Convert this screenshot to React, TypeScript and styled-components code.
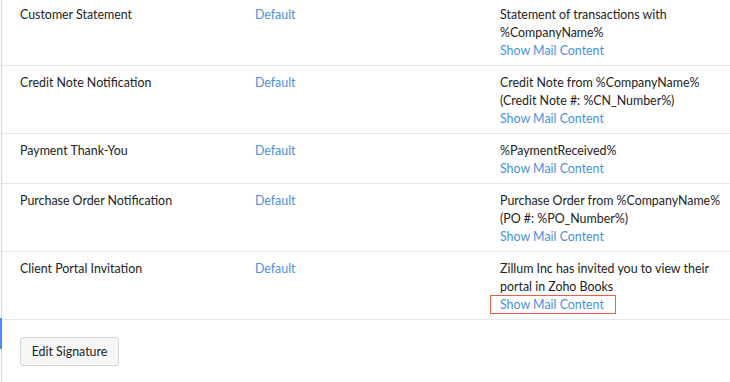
import React from "react";
import styled, { createGlobalStyle } from "styled-components";

const GlobalStyle = createGlobalStyle`
  html, body {
    margin: 0;
    padding: 0;
    background: #ffffff;
  }
  body {
    font-family: Lato, "Open Sans", "Liberation Sans", sans-serif;
    font-size: 12.4px;
    color: #222222;
    overflow: hidden;
  }
`;

const Page = styled.div`
  display: flex;
  width: 730px;
  height: 384px;
  margin-top: -2px;
`;

const Rail = styled.div`
  display: flex;
  flex-direction: column;
  align-items: flex-end;
  width: 2px;
  flex: 0 0 2px;
`;

const RailLine = styled.div<{ $length?: number }>`
  width: 1px;
  background: #d4d4d4;
  flex: ${(p) => (p.$length ? `0 0 ${p.$length}px` : "1")};
`;

const RailMarker = styled.div`
  width: 2px;
  flex: 0 0 31px;
  background: #408dfb;
`;

const Content = styled.div`
  flex: 1;
  display: flex;
  flex-direction: column;
`;

const Row = styled.div`
  display: grid;
  grid-template-columns: 253px 245px 1fr;
  border-bottom: 1px solid #e6e6e6;
  line-height: 18px;
`;

const Cell = styled.div<{ $first?: boolean }>`
  padding: 8px 4px 5px ${(p) => (p.$first ? "18px" : "0")};
`;

const Name = styled(Cell)`
  color: #222222;
`;

const Link = styled.a<{ $highlight?: boolean }>`
  position: relative;
  color: #4a8fe0;
  text-decoration: none;
  cursor: pointer;

  ${(p) =>
    p.$highlight &&
    `
    &::after {
      content: "";
      position: absolute;
      top: -2px;
      bottom: -2px;
      left: -10px;
      right: -12px;
      border: 1px solid #e8604c;
    }
  `}
`;

const Subject = styled.div`
  color: #222222;
`;

const Footer = styled.div`
  padding: 17px 0 0 18px;
`;

const Button = styled.button`
  height: 29px;
  width: 99px;
  padding: 0;
  font-family: inherit;
  font-size: 12.4px;
  color: #222222;
  background: #f6f6f6;
  border: 1px solid #d6d6d6;
  border-radius: 3px;
  cursor: pointer;
`;

type Template = {
  name: string;
  subject: string[];
  highlight?: boolean;
};

const templates: Template[] = [
  {
    name: "Customer Statement",
    subject: ["Statement of transactions with", "%CompanyName%"],
  },
  {
    name: "Credit Note Notification",
    subject: ["Credit Note from %CompanyName%", "(Credit Note #: %CN_Number%)"],
  },
  {
    name: "Payment Thank-You",
    subject: ["%PaymentReceived%"],
  },
  {
    name: "Purchase Order Notification",
    subject: ["Purchase Order from %CompanyName%", "(PO #: %PO_Number%)"],
  },
  {
    name: "Client Portal Invitation",
    subject: ["Zillum Inc has invited you to view their", "portal in Zoho Books"],
    highlight: true,
  },
];

export default function App() {
  return (
    <>
      <GlobalStyle />
      <Page>
        <Rail>
          <RailLine $length={320} />
          <RailMarker />
          <RailLine />
        </Rail>
        <Content>
          {templates.map((t) => (
            <Row key={t.name}>
              <Name $first>{t.name}</Name>
              <Cell>
                <Link>Default</Link>
              </Cell>
              <Cell>
                {t.subject.map((line) => (
                  <Subject key={line}>{line}</Subject>
                ))}
                <Link $highlight={t.highlight}>Show Mail Content</Link>
              </Cell>
            </Row>
          ))}
          <Footer>
            <Button>Edit Signature</Button>
          </Footer>
        </Content>
      </Page>
    </>
  );
}
